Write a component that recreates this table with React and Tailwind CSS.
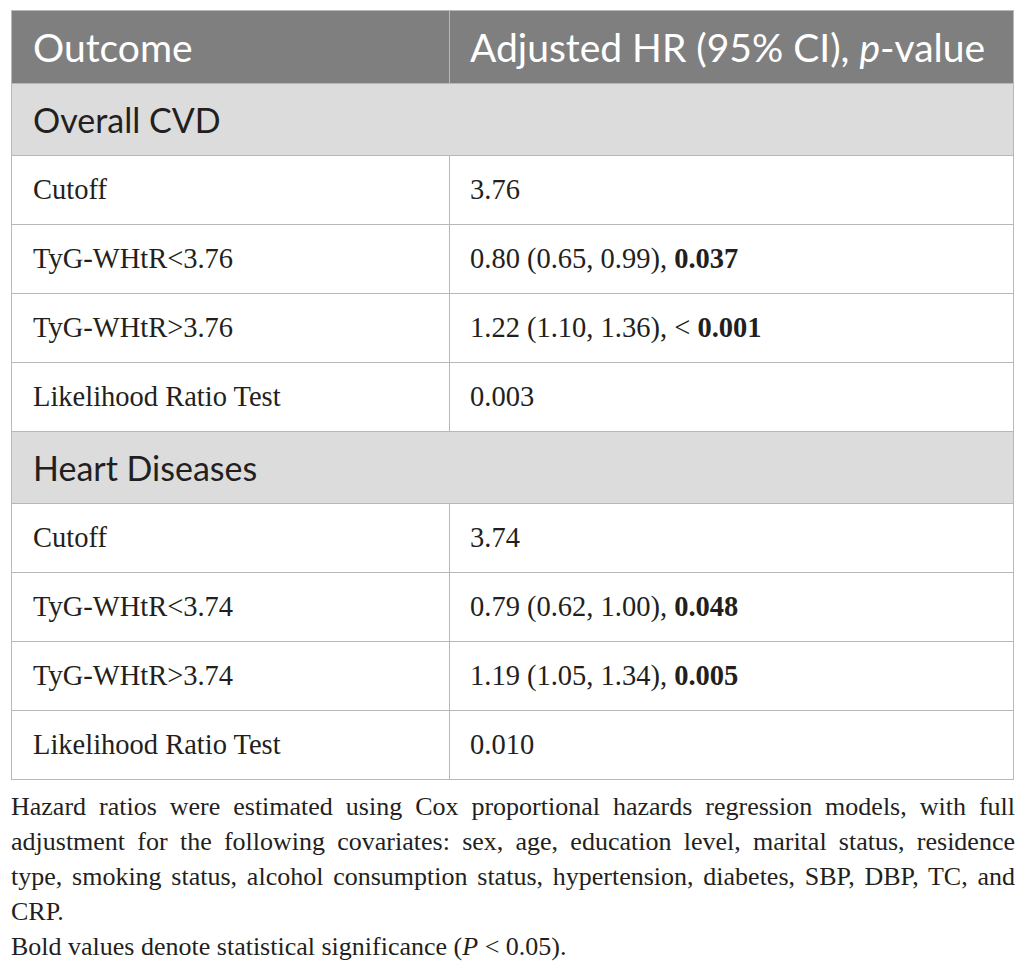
import React from "react";

const sections = [
  {
    title: "Overall CVD",
    rows: [
      { label: "Cutoff", value: <>3.76</> },
      { label: "TyG-WHtR<3.76", value: <>0.80 (0.65, 0.99), <b>0.037</b></> },
      { label: "TyG-WHtR>3.76", value: <>1.22 (1.10, 1.36), &lt; <b>0.001</b></> },
      { label: "Likelihood Ratio Test", value: <>0.003</> },
    ],
  },
  {
    title: "Heart Diseases",
    rows: [
      { label: "Cutoff", value: <>3.74</> },
      { label: "TyG-WHtR<3.74", value: <>0.79 (0.62, 1.00), <b>0.048</b></> },
      { label: "TyG-WHtR>3.74", value: <>1.19 (1.05, 1.34), <b>0.005</b></> },
      { label: "Likelihood Ratio Test", value: <>0.010</> },
    ],
  },
];

const App = () => {
  return (
    <div className="min-h-screen bg-white pt-[10px] pl-[11px] pr-[12px]">
      {/* Table */}
      <table className="w-[1003px] border-collapse border border-[#b8b8b8] text-[#231f20]">
        <thead>
          <tr className="h-[73px] bg-[#7f7f7f] text-white font-['Lato',sans-serif] text-[39px] font-normal">
            <th className="w-[438px] border border-[#b8b8b8] pl-[21px] text-left font-normal">Outcome</th>
            <th className="border border-[#b8b8b8] pl-[20px] text-left font-normal">
              Adjusted HR (95% CI), <i>p</i>-value
            </th>
          </tr>
        </thead>
        <tbody>
          {sections.map((s) => (
            <React.Fragment key={s.title}>
              <tr className="h-[72px] bg-[#dcdcdc]">
                <td colSpan={2} className="border border-[#b8b8b8] pl-[21px] font-['Lato',sans-serif] text-[34px]">
                  {s.title}
                </td>
              </tr>
              {s.rows.map((r) => (
                <tr key={r.label} className="h-[69px] font-['Liberation_Serif',serif] text-[28.5px]">
                  <td className="border border-[#b8b8b8] pl-[21px]">{r.label}</td>
                  <td className="border border-[#b8b8b8] pl-[20px]">{r.value}</td>
                </tr>
              ))}
            </React.Fragment>
          ))}
        </tbody>
      </table>

      {/* Footnote */}
      <div className="mt-[9px] w-[1004px] font-['Liberation_Serif',serif] text-[26px] leading-[35px] text-[#231f20]">
        <p className="text-justify [text-align-last:justify]">
          Hazard ratios were estimated using Cox proportional hazards regression models, with full
        </p>
        <p className="text-justify [text-align-last:justify]">
          adjustment for the following covariates: sex, age, education level, marital status, residence
        </p>
        <p className="text-justify [text-align-last:justify]">
          type, smoking status, alcohol consumption status, hypertension, diabetes, SBP, DBP, TC, and
        </p>
        <p>CRP.</p>
        <p>
          Bold values denote statistical significance (<i>P</i> &lt; 0.05).
        </p>
      </div>
    </div>
  );
};

export default App;
